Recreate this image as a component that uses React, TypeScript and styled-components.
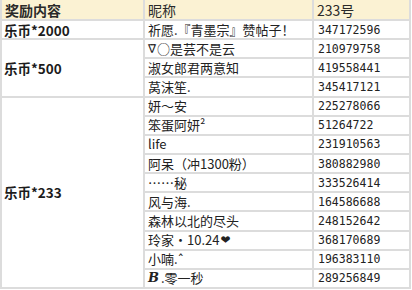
import React from "react";
import styled, { createGlobalStyle } from "styled-components";

const Global = createGlobalStyle`
  html, body { margin: 0; padding: 0; background: #ffffff; }
  body { font-family: "Noto Sans CJK SC", "DejaVu Sans", sans-serif; color: #222; }
`;

const Table = styled.div`
  display: grid;
  width: 411px;
  height: 289px;
  box-sizing: border-box;
  grid-template-columns: 141px 167px 95px;
  grid-template-rows: 19px repeat(14, 1fr);
  gap: 2px;
  padding: 0 2px 2px 2px;
  background: #dcdcdc;
`;

const Cell = styled.div<{ $row?: string; $col?: number }>`
  background: #ffffff;
  display: flex;
  align-items: center;
  min-height: 0;
  padding-left: 3px;
  font-size: 13px;
  line-height: 16px;
  white-space: nowrap;
  ${(p) => (p.$row ? `grid-row: ${p.$row};` : "")}
  ${(p) => (p.$col ? `grid-column: ${p.$col};` : "")}
`;

const HeadCell = styled(Cell)<{ $bold?: boolean }>`
  background: #fbf2d3;
  font-weight: ${(p) => (p.$bold ? 700 : 400)};
  font-size: 14px;
  color: #2a2a2a;
`;

const RewardCell = styled(Cell)`
  font-weight: 700;
  font-size: 13.5px;
  padding-left: 2px;
  color: #1c1c1c;
`;

const NameCell = styled(Cell)`
  padding-left: 3px;
`;

const IdCell = styled(Cell)`
  font-family: "DejaVu Sans Mono", "Liberation Mono", monospace;
  font-size: 11.5px;
  padding-left: 4px;
`;

const ScriptB = styled.span`
  font-family: "DejaVu Serif", "Liberation Serif", serif;
  font-weight: 700;
  font-style: italic;
  margin-right: 2px;
`;

const Symbol = styled.span`
  font-family: "DejaVu Sans", sans-serif;
  font-size: 12px;
  margin-right: 1px;
`;

const Heart = styled.span`
  font-family: "DejaVu Sans", sans-serif;
  font-size: 12px;
  margin-left: 1px;
`;

type Row = { name: React.ReactNode; id: string };

const rows: Row[] = [
  { name: "祈愿.『青墨宗』赞帖子！", id: "347172596" },
  {
    name: (
      <>
        <Symbol>∇̈</Symbol>○是芸不是云
      </>
    ),
    id: "210979758",
  },
  { name: "淑女郎君两意知", id: "419558441" },
  { name: "莴沫笙.", id: "345417121" },
  { name: "妍～安", id: "225278066" },
  { name: "笨蛋阿妍²", id: "51264722" },
  { name: "life", id: "231910563" },
  { name: "阿呆（冲1300粉）", id: "380882980" },
  { name: "……秘", id: "333526414" },
  { name: "风与海.", id: "164586688" },
  { name: "森林以北的尽头", id: "248152642" },
  {
    name: (
      <>
        玲家·10.24<Heart>❤</Heart>
      </>
    ),
    id: "368170689",
  },
  { name: "小喃.ˆ", id: "196383110" },
  {
    name: (
      <>
        <ScriptB>B</ScriptB>.零一秒
      </>
    ),
    id: "289256849",
  },
];

export default function App() {
  return (
    <>
      <Global />
      <Table>
        <HeadCell $bold>奖励内容</HeadCell>
        <HeadCell>昵称</HeadCell>
        <HeadCell>233号</HeadCell>

        <RewardCell $row="2" $col={1}>乐币*2000</RewardCell>
        <RewardCell $row="3 / span 3" $col={1}>乐币*500</RewardCell>
        <RewardCell $row="6 / span 10" $col={1}>乐币*233</RewardCell>

        {rows.map((r, i) => (
          <React.Fragment key={i}>
            <NameCell $row={String(i + 2)} $col={2}>{r.name}</NameCell>
            <IdCell $row={String(i + 2)} $col={3}>{r.id}</IdCell>
          </React.Fragment>
        ))}
      </Table>
    </>
  );
}
